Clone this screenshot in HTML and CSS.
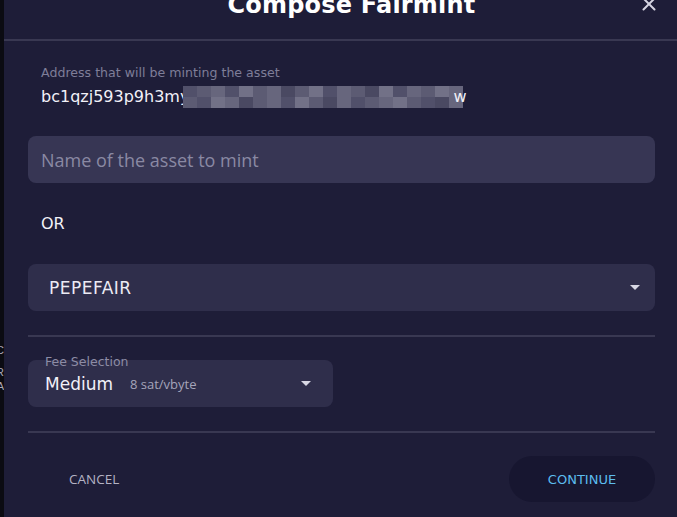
FILE: index.html
```html
<!DOCTYPE html>
<html lang="en">
<head>
<meta charset="utf-8">
<title>Compose Fairmint</title>
<link rel="stylesheet" href="styles.css">
</head>
<body>
<div class="screen">
  <div class="behind">
    <span class="frag frag-c">C</span>
    <span class="frag frag-r">R</span>
    <span class="frag frag-a">A</span>
  </div>
  <div class="modal">
    <header class="modal-head">
      <h2 class="modal-title">Compose Fairmint</h2>
      <button class="close" aria-label="Close">
        <svg width="14" height="14" viewBox="0 0 14 14"><path d="M1.5 1.5 L12.5 12.5 M12.5 1.5 L1.5 12.5" stroke="#d6d5e2" stroke-width="2" stroke-linecap="round"/></svg>
      </button>
    </header>
    <div class="modal-body">
      <div class="address">
        <div class="address-label">Address that will be minting the asset</div>
        <div class="address-value">bc1qzj593p9h3my<span class="mosaic"><i class="m1"></i><i class="m2"></i><i class="m3"></i><i class="m1"></i><i class="m4"></i><i class="m2"></i><i class="m3"></i><i class="m5"></i><i class="m2"></i><i class="m4"></i><i class="m1"></i><i class="m3"></i><i class="m2"></i><i class="m5"></i><i class="m4"></i><i class="m1"></i><i class="m3"></i><i class="m2"></i><i class="m4"></i><i class="m3"></i><i class="m2"></i><i class="m1"></i><i class="m4"></i><i class="m3"></i><i class="m5"></i><i class="m2"></i><i class="m3"></i><i class="m1"></i><i class="m4"></i><i class="m2"></i><i class="m5"></i><i class="m3"></i><i class="m1"></i><i class="m2"></i><i class="m3"></i><i class="m4"></i><i class="m2"></i><i class="m1"></i><i class="m5"></i><i class="m3"></i></span>w</div>
      </div>
      <div class="text-input">Name of the asset to mint</div>
      <div class="or">OR</div>
      <div class="select">
        <span class="select-value">PEPEFAIR</span>
        <span class="caret"></span>
      </div>
      <div class="divider"></div>
      <div class="fee">
        <span class="fee-label">Fee Selection</span>
        <span class="fee-name">Medium</span>
        <span class="fee-rate">8 sat/vbyte</span>
        <span class="caret"></span>
      </div>
      <div class="divider"></div>
      <div class="actions">
        <button class="btn-cancel">CANCEL</button>
        <button class="btn-continue">CONTINUE</button>
      </div>
    </div>
  </div>
</div>
</body>
</html>
```
FILE: styles.css
```css
* { box-sizing: border-box; }
html, body { margin: 0; padding: 0; }
body {
  background: #0b0b12;
  font-family: "DejaVu Sans", sans-serif;
  color: #ecebf4;
  width: 677px;
  height: 517px;
  overflow: hidden;
}
.screen {
  display: flex;
  height: 517px;
}
.behind {
  width: 4px;
  flex: 0 0 4px;
  position: relative;
  overflow: hidden;
  background: #0b0b12;
}
.frag {
  position: absolute;
  right: 0;
  font-family: "Liberation Sans", sans-serif;
  font-size: 11px;
  color: #a9a8b8;
}
.frag-c { top: 344px; }
.frag-r { top: 366px; }
.frag-a { top: 380px; }
.modal {
  flex: 1;
  background: #1e1d38;
  display: flex;
  flex-direction: column;
}
.modal-head {
  height: 41px;
  border-bottom: 2px solid #393852;
  display: flex;
  justify-content: center;
  position: relative;
}
.modal-title {
  margin: -15px 0 0 22px;
  font-size: 24px;
  font-weight: bold;
  line-height: 40px;
  color: #ffffff;
  letter-spacing: 0.2px;
}
.close {
  position: absolute;
  right: 21px;
  top: -3px;
  width: 14px;
  height: 14px;
  padding: 0;
  border: 0;
  background: none;
}
.close svg { display: block; }
.modal-body {
  padding: 0 22px 0 24px;
  display: flex;
  flex-direction: column;
}
.address {
  padding: 0 13px;
  margin-top: 24px;
}
.address-label {
  font-size: 12.6px;
  line-height: 16px;
  color: #7f7e98;
}
.address-value {
  margin-top: 5px;
  font-size: 16px;
  line-height: 22px;
  color: #f2f1f8;
  display: flex;
  align-items: center;
  white-space: nowrap;
}
.mosaic {
  display: grid;
  grid-template-columns: repeat(20, 14px);
  grid-template-rows: 11px 11px;
  width: 280px;
  height: 22px;
  margin-left: -6px;
  margin-right: -10px;
}
.mosaic i { display: block; }
.m1 { background: #51506a; }
.m2 { background: #5c5b73; }
.m3 { background: #67667d; }
.m4 { background: #727187; }
.m5 { background: #4a4962; }
.text-input {
  margin-top: 28px;
  height: 47px;
  border-radius: 8px;
  background: #373654;
  padding: 0 13px;
  display: flex;
  align-items: center;
  font-family: "Open Sans", sans-serif;
  font-size: 18px;
  color: #8a89a3;
}
.or {
  margin-top: 31px;
  padding-left: 13px;
  font-size: 16px;
  line-height: 20px;
  color: #f2f1f8;
}
.select {
  margin-top: 30px;
  height: 47px;
  border-radius: 8px;
  background: #2f2e4b;
  padding: 0 15px 0 21px;
  display: flex;
  align-items: center;
  justify-content: space-between;
}
.select-value {
  font-size: 17px;
  font-weight: 500;
  letter-spacing: 0.5px;
  color: #ecebf4;
}
.caret {
  width: 0;
  height: 0;
  border-left: 5px solid transparent;
  border-right: 5px solid transparent;
  border-top: 5px solid #d8d7e4;
}
.divider {
  margin-top: 24px;
  height: 2px;
  background: #393852;
}
.fee {
  margin-top: 23px;
  width: 305px;
  height: 47px;
  border-radius: 8px;
  background: #2f2e4b;
  padding: 0 22px 0 17px;
  display: flex;
  align-items: center;
  position: relative;
}
.fee-label {
  position: absolute;
  left: 17px;
  top: -5px;
  font-size: 12.5px;
  line-height: 14px;
  color: #8d8ca5;
}
.fee-name {
  font-size: 17px;
  font-weight: 500;
  color: #f2f1f8;
}
.fee-rate {
  margin-left: 17px;
  font-family: "Open Sans", sans-serif;
  font-size: 13px;
  color: #a5a4ba;
  flex: 1;
}
.actions {
  margin-top: 23px;
  display: flex;
  justify-content: space-between;
  align-items: center;
}
.btn-cancel {
  margin-left: 26px;
  border: 0;
  background: none;
  padding: 0 15px;
  font-family: "Open Sans", sans-serif;
  font-size: 13.5px;
  color: #b4b3c4;
}
.btn-continue {
  width: 146px;
  height: 46px;
  border-radius: 23px;
  border: 0;
  background: #171630;
  font-family: "DejaVu Sans", sans-serif;
  font-size: 13px;
  color: #5cbcee;
}
```
